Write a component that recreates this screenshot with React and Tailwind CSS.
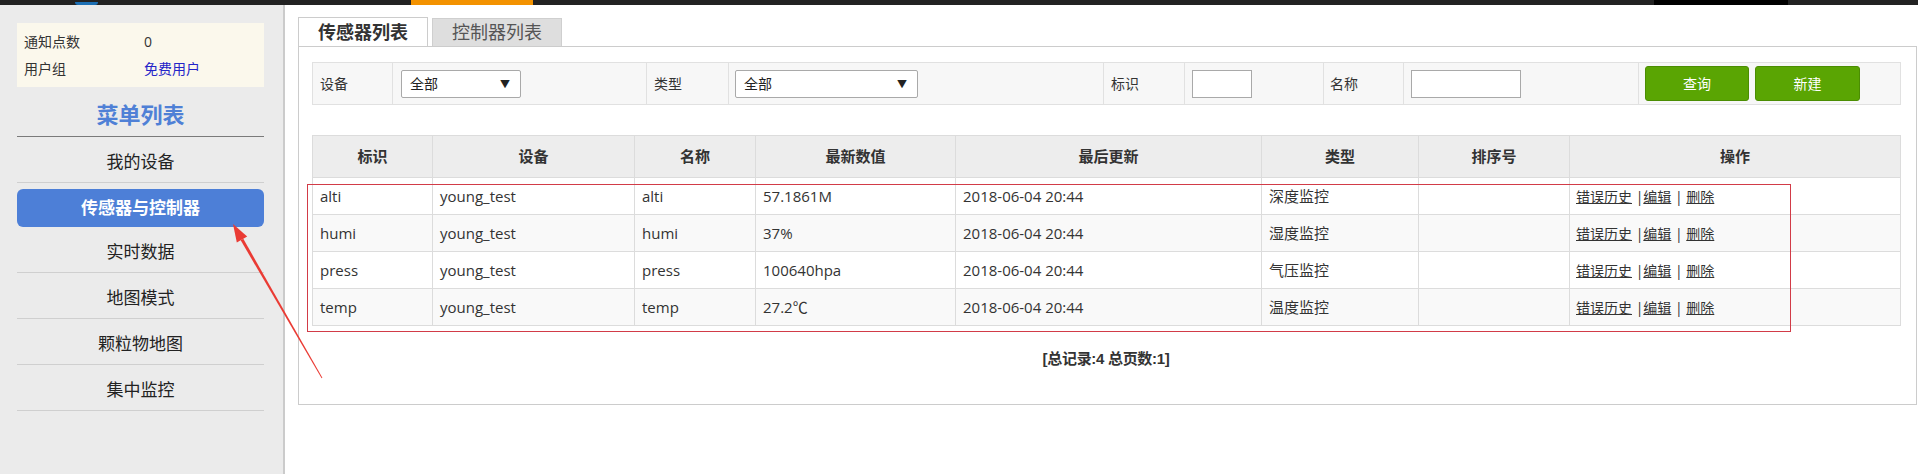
import React from "react";

const menu = ["我的设备", "传感器与控制器", "实时数据", "地图模式", "颗粒物地图", "集中监控"];

const cols = [
    { title: "标识", w: "w-[120px]" },
    { title: "设备", w: "w-[202px]" },
    { title: "名称", w: "w-[121px]" },
    { title: "最新数值", w: "w-[200px]" },
    { title: "最后更新", w: "w-[306px]" },
    { title: "类型", w: "w-[157px]" },
    { title: "排序号", w: "w-[151px]" },
    { title: "操作", w: "w-[331px]" },
];

const rows = [
    ["alti", "young_test", "alti", "57.1861M", "2018-06-04 20:44", "深度监控"],
    ["humi", "young_test", "humi", "37%", "2018-06-04 20:44", "湿度监控"],
    ["press", "young_test", "press", "100640hpa", "2018-06-04 20:44", "气压监控"],
    ["temp", "young_test", "temp", "27.2℃", "2018-06-04 20:44", "温度监控"],
];

const FakeSelect = ({ width }) => (
    <div className={`${width} h-[28px] flex items-center justify-between bg-white border border-[#a9a9a9] rounded-[2px] pl-[8px] pr-[10px] text-[14px] text-[#222]`}>
        <span>全部</span>
        <span className="text-[10px] leading-none">▼</span>
    </div>
);

const Sidebar = () => (
    <aside className="w-[285px] shrink-0 bg-[#ebebeb] border-r-2 border-[#cbcbcb] pl-[17px] pr-[19px] pt-[18px]">
        <div className="bg-[#fbf8ec] py-[5px] pl-[7px] text-[14px] text-[#333]">
            <div className="flex h-[27px] items-center">
                <span className="w-[120px]">通知点数</span>
                <span>0</span>
            </div>
            <div className="flex h-[27px] items-center">
                <span className="w-[120px]">用户组</span>
                <span className="text-[#2424c8]">免费用户</span>
            </div>
        </div>
        <div className="h-[50px] pt-[12px] border-b border-[#7a7a7a] text-center text-[22px] leading-[30px] font-bold text-[#4f80d6]">
            菜单列表
        </div>
        {menu.map((m, i) =>
            i === 1 ? (
                <div key={m} className="mt-[6px] h-[38px] rounded-[6px] bg-[#4d7fd7] flex items-center justify-center text-[17px] font-bold text-white">
                    {m}
                </div>
            ) : (
                <div key={m} className="h-[46px] pt-[4px] border-b border-[#cfcfcf] flex items-center justify-center text-[17px] text-[#222]">
                    {m}
                </div>
            )
        )}
    </aside>
);

const FilterBar = () => (
    <table className="table-fixed w-[1588px] border-collapse bg-[#f7f7f7] text-[14px] text-[#333]">
        <tbody>
            <tr className="h-[42px]">
                <td className="w-[80px] border border-[#e1e1e1] pl-[7px]">设备</td>
                <td className="w-[254px] border border-[#e1e1e1] pl-[8px]"><FakeSelect width="w-[120px]" /></td>
                <td className="w-[82px] border border-[#e1e1e1] pl-[7px]">类型</td>
                <td className="w-[375px] border border-[#e1e1e1] pl-[6px]"><FakeSelect width="w-[183px]" /></td>
                <td className="w-[81px] border border-[#e1e1e1] pl-[7px]">标识</td>
                <td className="w-[139px] border border-[#e1e1e1] pl-[7px]">
                    <div className="w-[60px] h-[28px] bg-white border border-[#a9a9a9]" />
                </td>
                <td className="w-[80px] border border-[#e1e1e1] pl-[6px]">名称</td>
                <td className="w-[235px] border border-[#e1e1e1] pl-[7px]">
                    <div className="w-[110px] h-[28px] bg-white border border-[#a9a9a9]" />
                </td>
                <td className="w-[262px] border border-[#e1e1e1] pl-[6px]">
                    <div className="flex gap-[6px]">
                        <button className="w-[104px] h-[35px] rounded-[3px] bg-[#5aa503] border border-[#4b8d02] text-white text-[14px]">查询</button>
                        <button className="w-[105px] h-[35px] rounded-[3px] bg-[#5aa503] border border-[#4b8d02] text-white text-[14px]">新建</button>
                    </div>
                </td>
            </tr>
        </tbody>
    </table>
);

const DataTable = () => (
    <table className="table-fixed w-[1588px] border-collapse text-[15px] text-[#333]">
        <thead>
            <tr className="h-[42px] bg-[#ededed]">
                {cols.map((c) => (
                    <th key={c.title} className={`${c.w} border border-[#dcdcdc] font-bold text-center`}>{c.title}</th>
                ))}
            </tr>
        </thead>
        <tbody>
            {rows.map((r, i) => (
                <tr key={r[0]} className={`h-[37px] ${i % 2 ? "bg-[#f9f9f9]" : "bg-white"}`}>
                    {r.map((v, j) => (
                        <td key={j} className="border border-[#dcdcdc] pl-[7px]">{v}</td>
                    ))}
                    <td className="border border-[#dcdcdc] pl-[7px]"></td>
                    <td className="border border-[#dcdcdc] pl-[6px] text-[14px]">
                        <span className="underline">错误历史</span> |<span className="underline">编辑</span> | <span className="underline">删除</span>
                    </td>
                </tr>
            ))}
        </tbody>
    </table>
);

export default function App() {
    return (
        <div className="relative w-[1918px] h-[474px] overflow-hidden bg-white font-['Open_Sans','Noto_Sans_CJK_SC',sans-serif]">
            {/* top nav remnant */}
            <div className="h-[5px] bg-[#222] flex items-end">
                <div className="ml-[75px] w-[23px] h-[3px] rounded-b-full bg-[#1c6fb4]" />
                <div className="ml-[313px] w-[122px] h-[5px] bg-[#f39200]" />
                <div className="ml-[1121px] w-[134px] h-[5px] bg-black" />
            </div>

            <div className="flex h-[469px]">
                <Sidebar />

                <main className="flex-1 pl-[13px] pr-[2px] pt-[12px]">
                    <div className="flex items-end h-[29px]">
                        <div className="relative z-10 w-[130px] h-[29px] bg-white border border-b-0 border-[#cccccc] flex items-center justify-center text-[18px] font-bold text-[#333]">
                            传感器列表
                        </div>
                        <div className="ml-[4px] w-[130px] h-[28px] bg-[#dedede] border border-b-0 border-[#cfcfcf] flex items-center justify-center text-[18px] text-[#555]">
                            控制器列表
                        </div>
                    </div>
                    <div className="border border-[#cccccc] pl-[13px] pr-[15px] pt-[15px] pb-[35px]">
                        <FilterBar />
                        <div className="mt-[30px]">
                            <DataTable />
                        </div>
                        <div className="mt-[23px] w-[1588px] text-center text-[15px] leading-[20px] font-bold text-[#333] tracking-[-0.3px] font-['Liberation_Sans','Noto_Sans_CJK_SC',sans-serif]">
                            [总记录:4 总页数:1]
                        </div>
                    </div>
                </main>
            </div>

            {/* red annotation box */}
            <div className="absolute left-[307px] top-[184px] w-[1484px] h-[148px] border border-[#d23b47] pointer-events-none" />
            {/* red annotation arrow */}
            <svg className="absolute left-0 top-0 pointer-events-none" width="1918" height="474">
                <polygon points="322.4,377.75 321.6,378.25 240.7,240.35 243.3,238.85" fill="#ea3b34" />
                <polygon points="233,224 247.2,236.6 236.8,242.6" fill="#ea3b34" />
            </svg>
        </div>
    );
}
